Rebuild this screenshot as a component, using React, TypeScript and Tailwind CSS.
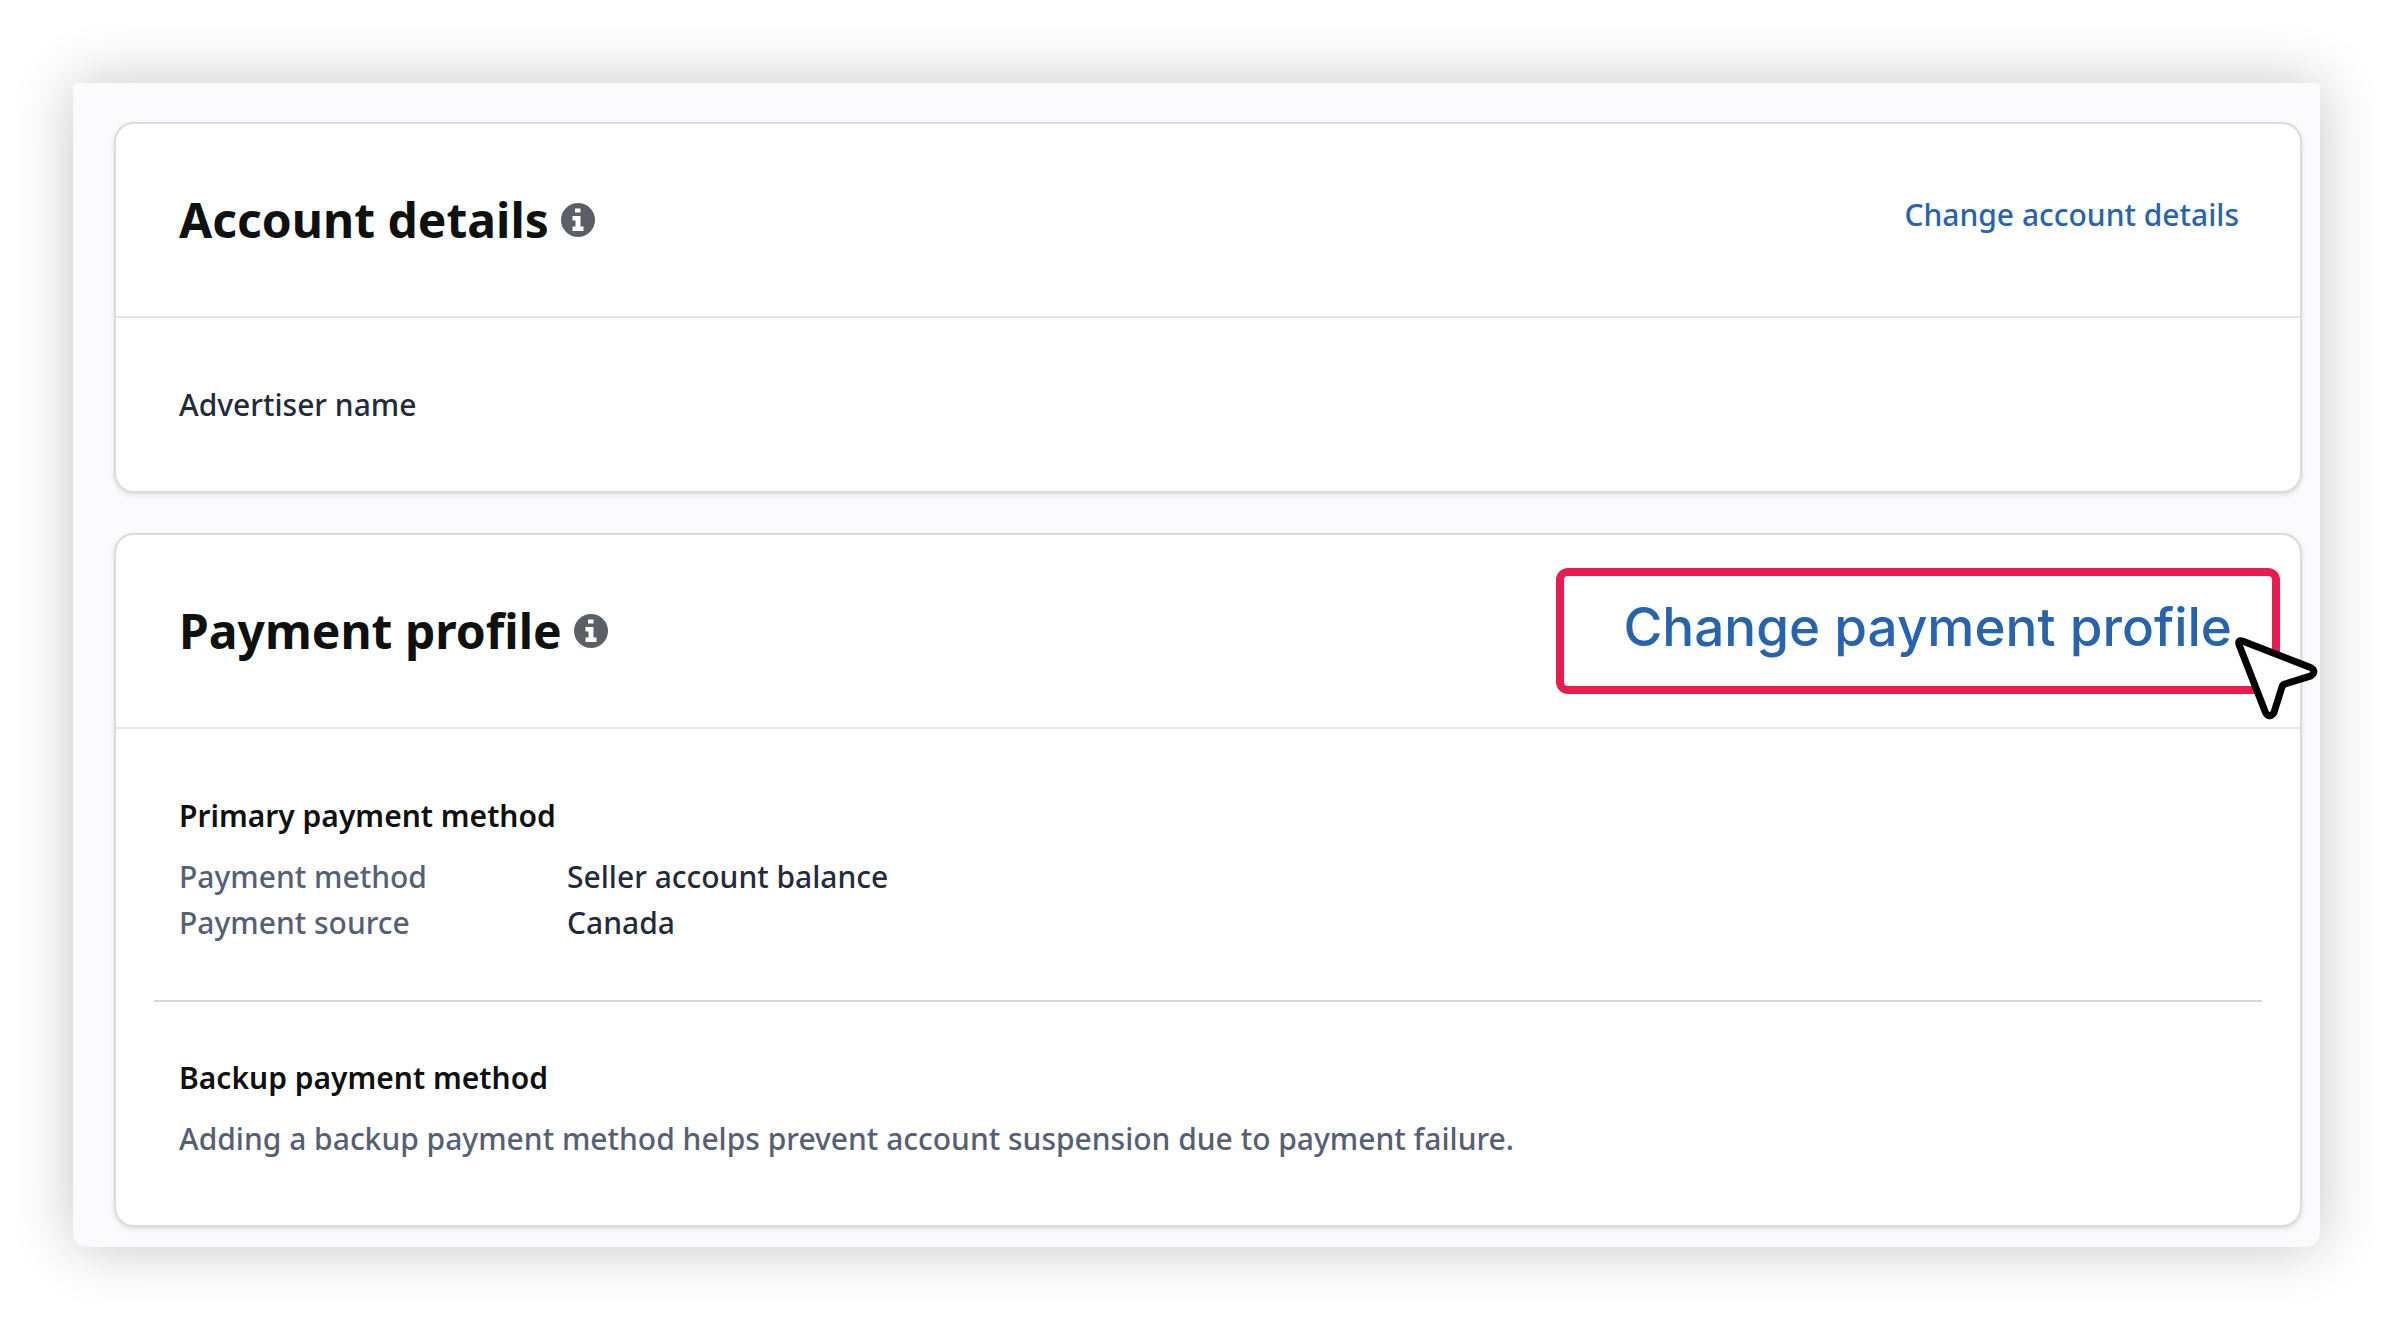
import type { ReactNode } from "react";

const PRIMARY_METHOD = [
    { label: "Payment method", value: "Seller account balance" },
    { label: "Payment source", value: "Canada" },
];

function InfoIcon() {
    return (
        <svg viewBox="0 0 34 34" className="size-[34px] shrink-0" aria-hidden="true">
            <circle cx="17" cy="17" r="17" fill="#5b5f66"/>
            <path d="M14 5.500h5.500v4H14zM11.500 13h8v10.500h3V28h-11v-4.500h3v-6h-3z" fill="#fff"/>
        </svg>
    );
}

function CursorIcon() {
    return (
        <svg viewBox="0 0 84 84" className="absolute -right-[46px] top-[60px] size-[84px]" aria-hidden="true">
            <path
                d="M9 5.200L76.500 31.500Q83 35.300 77 39.800L51 48Q48.600 48.600 48 51L39.800 77Q35.300 83 31.500 76.500L5.200 9Q3.300 3.300 9 5.200Z"
                fill="#fff"
                stroke="#000"
                strokeWidth="7"
                strokeLinejoin="round"
            />
        </svg>
    );
}

{/* --- CARD --- */}
function Card({ title, action, children }: { title: string; action: ReactNode; children: ReactNode }) {
    return (
        <section className="rounded-[20px] border-2 border-[#dcdce0] bg-white shadow-[0_2px_5px_rgba(0,0,0,0.12)]">
            <header className="flex h-[194px] items-center justify-between border-b-2 border-[#e3e3e8] pl-[63px]">
                <div className="flex items-center gap-3">
                    <h2 className="text-[48px] leading-[64px] font-bold text-[#0f1111]">{title}</h2>
                    <button type="button" aria-label={`About ${title.toLowerCase()}`}>
                        <InfoIcon/>
                    </button>
                </div>
                {action}
            </header>
            {children}
        </section>
    );
}

export default function App() {
    return (
        <div className="bg-white px-[73px] pt-[83px] pb-[74px] font-['Noto_Sans','Open_Sans',sans-serif] text-[30px] leading-[46px] font-medium text-[#232b3b]">
            <main className="flex flex-col gap-10 rounded-t-[4px] rounded-b-[14px] bg-[#fbfbfd] pt-[39px] pr-[18px] pb-5 pl-[41px] shadow-[0_0_60px_rgba(0,0,0,0.23)]">
                <Card
                    title="Account details"
                    action={<a href="#account" className="mr-[61px] pb-2.5 text-[#2864ae]">Change account details</a>}
                >
                    <p className="px-[63px] pt-16 pb-[63px]">Advertiser name</p>
                </Card>

                <Card
                    title="Payment profile"
                    action={
                        <a
                            href="#payment"
                            className="relative mr-5 flex h-[126px] items-center rounded-[12px] border-8 border-[#e81c4f] pr-10 pb-2 pl-[60px] font-[Inter,sans-serif] text-[53px] leading-[64px] font-medium text-[#2864ae]"
                        >
                            Change payment profile
                            <CursorIcon/>
                        </a>
                    }
                >
                    <div className="px-[63px] pt-16 pb-[54px]">
                        <h3 className="mb-[15px] font-semibold text-[#0f1111]">Primary payment method</h3>
                        <dl className="grid grid-cols-[388px_1fr]">
                            {PRIMARY_METHOD.map((row) => (
                                <div key={row.label} className="contents">
                                    <dt className="text-[#566074]">{row.label}</dt>
                                    <dd>{row.value}</dd>
                                </div>
                            ))}
                        </dl>
                    </div>
                    <hr className="mx-[38px] border-t-2 border-[#d4d7de]"/>
                    <div className="px-[63px] pt-[53px] pb-[63px]">
                        <h3 className="mb-[15px] font-semibold text-[#0f1111]">Backup payment method</h3>
                        <p className="text-[#566074]">
                            Adding a backup payment method helps prevent account suspension due to payment failure.
                        </p>
                    </div>
                </Card>
            </main>
        </div>
    );
}
